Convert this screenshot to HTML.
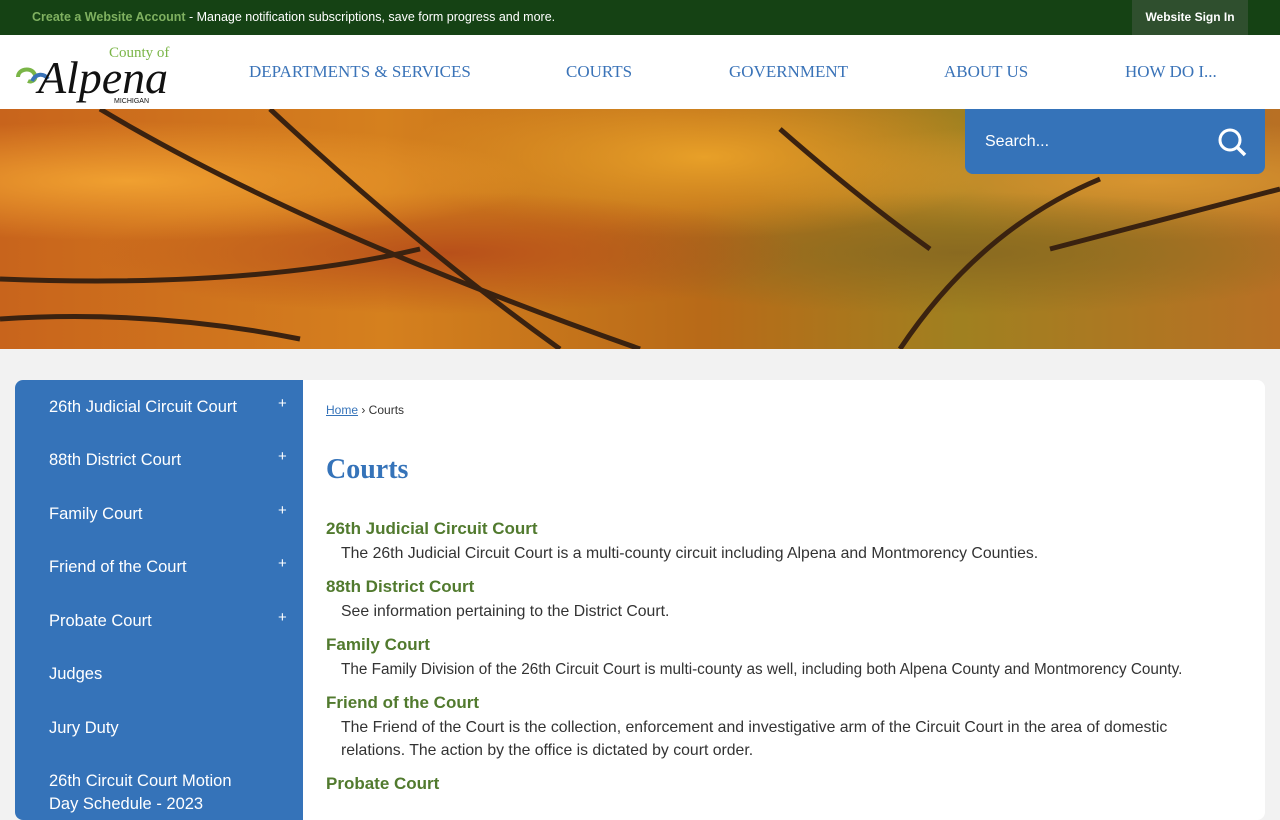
<!DOCTYPE html>
<html><head><meta charset="utf-8"><style>
*{margin:0;padding:0;box-sizing:border-box}
body{width:1280px;height:800px;overflow:hidden;background:#f2f2f2;font-family:"Liberation Sans",sans-serif;position:relative}
.top{height:35px;background:#154214;position:relative}
.top .msg{position:absolute;left:32px;top:10px;font-size:12.5px;color:#fff}
.top .msg b{color:#7fb160;font-weight:bold}
.top .sign{position:absolute;left:1132px;top:0;width:116px;height:35px;background:#2f4f2e;color:#fff;font-size:12px;font-weight:bold;text-align:center;line-height:35px}
.hdr{height:74px;background:#fff;position:relative}
.nav{position:absolute;top:27px;font-family:"Liberation Serif",serif;font-size:17px;color:#3a73b8}
.hero{position:absolute;top:109px;left:0;width:1280px;height:240px;overflow:hidden;
background:
radial-gradient(ellipse at 10% 30%,#f0a030 0,transparent 25%),
radial-gradient(ellipse at 35% 60%,#b8501a 0,transparent 30%),
radial-gradient(ellipse at 55% 20%,#e8a028 0,transparent 30%),
radial-gradient(ellipse at 75% 60%,#8a6a20 0,transparent 30%),
radial-gradient(ellipse at 90% 30%,#d89530 0,transparent 25%),
linear-gradient(90deg,#c8641c,#d5801e 30%,#b86a18 55%,#a08020 75%,#b87024);}
.search{position:absolute;left:965px;top:109px;width:300px;height:65px;background:#3573b9;border-radius:0 0 8px 8px;color:#fff;font-size:16px}
.card{position:absolute;left:15px;top:380px;width:1250px;height:440px;background:#fff;border-radius:8px;overflow:hidden}
.side{position:absolute;left:0;top:0;width:288px;height:440px;background:#3573b9}
.side div{position:absolute;left:34px;color:#fff;font-size:16.5px;line-height:23px}
.side span{position:absolute;left:263px;color:#fff;font-size:15px}
.main{position:absolute;left:311px}
h2{position:absolute;font-family:"Liberation Serif",serif;font-size:28px;color:#3573b9;font-weight:bold}
.t{position:absolute;left:311px;color:#517a2e;font-weight:bold;font-size:17px}
.d{position:absolute;left:326px;color:#333;font-size:15.8px;line-height:23px;width:910px;white-space:nowrap}
</style></head><body>
<div class="top"><div class="msg"><b>Create a Website Account</b> - Manage notification subscriptions, save form progress and more.</div><div class="sign">Website Sign In</div></div>
<div class="hdr">
<svg style="position:absolute;left:14px;top:6px" width="165" height="66" viewBox="0 0 165 66">
<path d="M4 36c0-8 12-10 16-4s-2 10-6 8" stroke="#7ab547" stroke-width="4" fill="none"/>
<path d="M18 40c4-8 12-8 16-2" stroke="#3a73b8" stroke-width="4" fill="none"/>
<text x="95" y="16" font-family="Liberation Serif" font-size="15" fill="#7ab547">County of</text>
<text x="24" y="52" font-family="Liberation Serif" font-style="italic" font-size="46" fill="#111" textLength="130">Alpena</text>
<text x="100" y="62" font-family="Liberation Sans" font-size="7" fill="#111">MICHIGAN</text>
</svg>
<div class="nav" style="left:249px">DEPARTMENTS &amp; SERVICES</div>
<div class="nav" style="left:566px">COURTS</div>
<div class="nav" style="left:729px">GOVERNMENT</div>
<div class="nav" style="left:944px">ABOUT US</div>
<div class="nav" style="left:1125px">HOW DO I...</div>
</div>
<div class="hero"><svg width="1280" height="240"><g stroke="#3a2210" stroke-width="5" fill="none">
<path d="M100 0 Q300 120 640 240"/><path d="M270 0 Q420 140 560 240"/><path d="M0 170 Q250 180 420 140"/><path d="M900 240 Q980 120 1100 70"/><path d="M1050 140 L1280 80"/><path d="M780 20 Q860 90 930 140"/><path d="M0 210 Q150 200 300 230"/></g></svg></div>
<div class="search"><div style="position:absolute;left:20px;top:24px">Search...</div>
<svg style="position:absolute;left:253px;top:19px" width="30" height="30" viewBox="0 0 30 30"><circle cx="12" cy="12" r="10" stroke="#fff" stroke-width="3" fill="none"/><path d="M19 19l8 8" stroke="#fff" stroke-width="3.5"/></svg></div>
<div class="card">
<div class="side">
<div style="top:16px">26th Judicial Circuit Court</div><span style="top:15px">+</span>
<div style="top:69px">88th District Court</div><span style="top:68px">+</span>
<div style="top:123px">Family Court</div><span style="top:122px">+</span>
<div style="top:176px">Friend of the Court</div><span style="top:175px">+</span>
<div style="top:230px">Probate Court</div><span style="top:229px">+</span>
<div style="top:283px">Judges</div>
<div style="top:337px">Jury Duty</div>
<div style="top:390px">26th Circuit Court Motion<br>Day Schedule - 2023</div>
</div>
<div class="main" style="top:23px;font-size:12px;color:#333"><u style="color:#3573b9">Home</u> › Courts</div>
<h2 style="left:311px;top:74px">Courts</h2>
<div class="t" style="top:139px">26th Judicial Circuit Court</div>
<div class="d" style="top:162px">The 26th Judicial Circuit Court is a multi-county circuit including Alpena and Montmorency Counties.</div>
<div class="t" style="top:197px">88th District Court</div>
<div class="d" style="top:220px">See information pertaining to the District Court.</div>
<div class="t" style="top:255px">Family Court</div>
<div class="d" style="top:278px;font-size:15.3px">The Family Division of the 26th Circuit Court is multi-county as well, including both Alpena County and Montmorency County.</div>
<div class="t" style="top:313px">Friend of the Court</div>
<div class="d" style="top:336px">The Friend of the Court is the collection, enforcement and investigative arm of the Circuit Court in the area of domestic<br>relations. The action by the office is dictated by court order.</div>
<div class="t" style="top:394px">Probate Court</div>
</div>
</body></html>
